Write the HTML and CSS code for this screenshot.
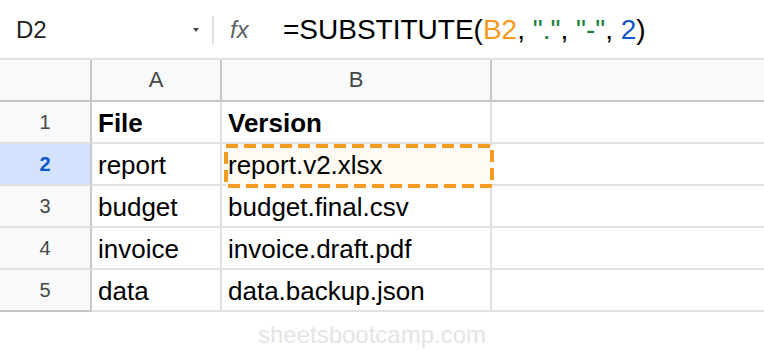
FILE: index.html
```html
<!DOCTYPE html>
<html>

<head>
	<link rel="stylesheet" href="styles.css">
</head>

<body>
	<div class="formulabar">
		<div class="namebox">
			<span class="cellref">D2</span>
			<svg class="caret" width="6" height="4" viewBox="0 0 6 4">
				<path d="M0 0 L6 0 L3 4 Z" fill="#444746" />
			</svg>
		</div>
		<div class="divider"></div>
		<div class="fx">fx</div>
		<div class="formula">=SUBSTITUTE(<span class="ref">B2</span>, <span class="str">"."</span>, <span class="str">"-"</span>, <span class="num">2</span>)</div>
	</div>

	<div class="sheet">
		<div class="cell corner"></div>
		<div class="cell colhead">A</div>
		<div class="cell colhead">B</div>
		<div class="cell colhead last"></div>

		<div class="cell rowhead">1</div>
		<div class="cell bold">File</div>
		<div class="cell bold">Version</div>
		<div class="cell last"></div>

		<div class="cell rowhead selected">2</div>
		<div class="cell">report</div>
		<div class="cell target">
			<svg class="marquee" width="270" height="44" viewBox="0 0 270 44">
				<rect x="2" y="2" width="266" height="40" fill="#fffaf3" stroke="#f59a23" stroke-width="4" stroke-dasharray="12 6" />
			</svg>
			<span class="value">report.v2.xlsx</span>
		</div>
		<div class="cell last"></div>

		<div class="cell rowhead">3</div>
		<div class="cell">budget</div>
		<div class="cell">budget.final.csv</div>
		<div class="cell last"></div>

		<div class="cell rowhead">4</div>
		<div class="cell">invoice</div>
		<div class="cell">invoice.draft.pdf</div>
		<div class="cell last"></div>

		<div class="cell rowhead bottom">5</div>
		<div class="cell">data</div>
		<div class="cell">data.backup.json</div>
		<div class="cell last"></div>
	</div>

	<div class="watermark">sheetsbootcamp.com</div>
</body>

</html>
```

FILE: styles.css
```css
body {
	margin: 0;
	width: 764px;
	height: 352px;
	overflow: hidden;
	background-color: #ffffff;
	font-family: "Liberation Sans", Arial, sans-serif;
	color: #000000;
}

/* formula bar */

.formulabar {
	display: flex;
	align-items: center;
	height: 58px;
	padding-top: 2px;
	box-sizing: border-box;
}

.namebox {
	display: flex;
	align-items: center;
	width: 212px;
	padding-left: 16px;
	padding-right: 13px;
	box-sizing: border-box;
}

.cellref {
	flex: 1;
	font-size: 24px;
	color: #1f1f1f;
}

.caret {
	display: block;
}

.divider {
	width: 2px;
	height: 28px;
	background-color: #e0e0e0;
}

.fx {
	width: 53px;
	margin-left: 16px;
	font-size: 24px;
	font-style: italic;
	color: #5f6368;
}

.formula {
	font-size: 28px;
	white-space: nowrap;
}

.ref {
	color: #f7981d;
}

.str {
	color: #188038;
}

.num {
	color: #1155cc;
}

/* grid */

.sheet {
	display: grid;
	grid-template-columns: 92px 130px 270px 1fr;
	border-top: 2px solid #e1e1e1;
}

.cell {
	display: flex;
	align-items: center;
	height: 42px;
	padding: 3px 6px 0;
	box-sizing: border-box;
	border-right: 2px solid #e1e1e1;
	border-bottom: 2px solid #e1e1e1;
	font-size: 26px;
	white-space: nowrap;
}

.cell.last {
	border-right: none;
}

.corner,
.colhead {
	background-color: #f8f9fa;
	border-color: #c7c7c7;
}

.colhead {
	justify-content: center;
	padding-top: 0;
	font-size: 22px;
	color: #444746;
}

.rowhead {
	justify-content: center;
	padding-top: 1px;
	background-color: #f8f9fa;
	border-right-color: #c7c7c7;
	font-size: 20px;
	color: #444746;
}

.rowhead.bottom {
	border-bottom-color: #c7c7c7;
}

.rowhead.selected {
	background-color: #d3e3fd;
	color: #0b57d0;
	font-weight: bold;
}

.bold {
	font-weight: bold;
}

.target {
	position: relative;
}

.marquee {
	position: absolute;
	left: 2px;
	top: 0;
}

.value {
	position: relative;
}

.watermark {
	margin-top: 9px;
	padding-right: 20px;
	text-align: center;
	font-size: 24px;
	color: #e4e4e4;
}
```
